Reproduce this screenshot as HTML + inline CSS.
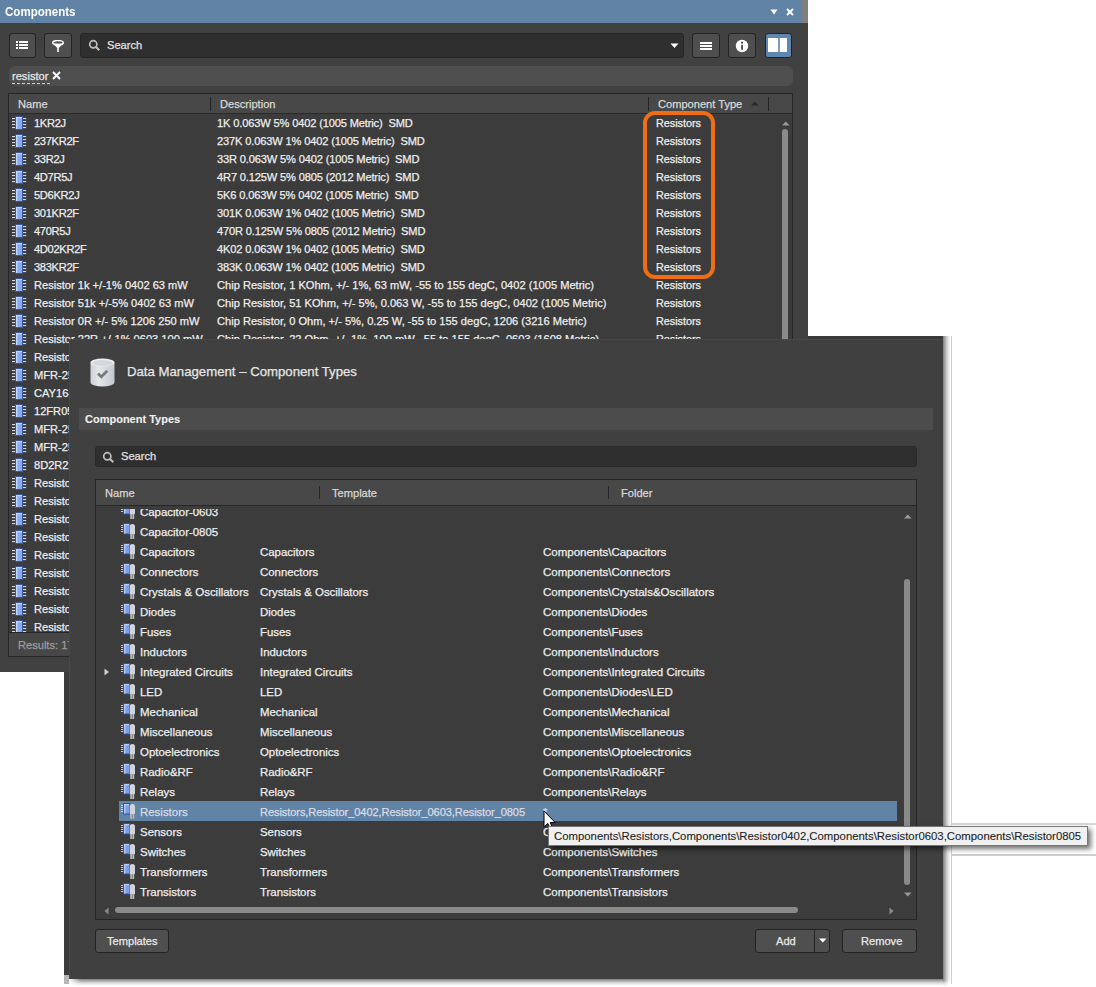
<!DOCTYPE html>
<html><head><meta charset="utf-8">
<style>
*{box-sizing:border-box;margin:0;padding:0}
html,body{width:1096px;height:987px;overflow:hidden;background:#fff}
body{position:relative;font-family:"Liberation Sans",sans-serif;font-size:11.1px;color:#eeeeee;-webkit-text-stroke:0.25px currentColor}
.a{position:absolute}
.t{position:absolute;white-space:pre;line-height:1}
.btn{position:absolute;background:#4f4f4f;border:1px solid #232323;border-radius:3px}
svg{display:block}
/* panel */
#panel{position:absolute;left:0;top:0;width:808px;height:672px;background:#414141;overflow:hidden}
#ptable{position:absolute;left:8px;top:93px;width:785px;height:564px;border:1px solid #262626;background:#3c3c3c;overflow:hidden}
#phead{position:absolute;left:0;top:0;width:783px;height:20px;background:#484848;border-bottom:1px solid #2a2a2a}
#pdata{position:absolute;left:0;top:20px;width:783px;height:518px;overflow:hidden}
#pfoot{position:absolute;left:0;top:538px;width:783px;height:24px;background:#474747;border-top:1px solid #262626}
.prow{position:absolute;left:0;height:18px;width:783px;line-height:18px}
.prow .ic{position:absolute;left:3px;top:2px}
.prow .n{position:absolute;left:25px;top:0;white-space:pre}
.prow .d{position:absolute;left:208px;top:0;white-space:pre}
.prow .ty{position:absolute;left:647px;top:0;white-space:pre;font-size:10.8px}
.sep{position:absolute;width:1px;background:#262626}
/* dialog */
#dlg{position:absolute;left:69px;top:339px;width:874px;height:640px;background:#404040}
#dtable{position:absolute;left:25px;top:140px;width:822px;height:441px;border:1px solid #262626;background:#3c3c3c;overflow:hidden}
#dhead{position:absolute;left:0;top:0;width:820px;height:26px;background:#484848;border-bottom:1px solid #262626}
#ddata{position:absolute;left:0;top:29px;width:820px;height:394px;overflow:hidden}
.drow{position:absolute;left:0;height:20px;width:820px;line-height:20px}
.drow .ic{position:absolute;left:25px;top:2px}
.drow .n{position:absolute;left:44px;top:1px;white-space:pre;font-size:11.45px}
.drow .tp{position:absolute;left:164px;top:1px;white-space:pre;font-size:11.4px}
.drow .f{position:absolute;left:447px;top:1px;white-space:pre;font-size:11.5px}
.drow.sel:before{content:"";position:absolute;left:23px;top:0;width:778px;height:20px;background:#6183a6}
.drow.sel span{color:#d6dde6}
</style></head>
<body>
<div id="panel">
  <div class="a" style="left:0;top:0;width:801px;height:23px;background:#6083a6"></div>
  <div class="a" style="left:801px;top:0;width:7px;height:23px;background:#7f7f7f"></div>
  <div class="t" style="left:5px;top:5px;font-weight:bold;font-size:13.2px;color:#fff;-webkit-text-stroke:0;transform:scaleX(.875);transform-origin:0 0">Components</div>
  <svg class="a" style="left:770px;top:9px" width="8" height="6"><path d="M0.5 0.5H7.5L4 5.5Z" fill="#fff"/></svg>
  <svg class="a" style="left:786px;top:8px" width="8" height="8"><path d="M1 1L7 7M7 1L1 7" stroke="#fff" stroke-width="1.8"/></svg>

  <!-- toolbar -->
  <div class="btn" style="left:9px;top:33px;width:27px;height:25px"></div>
  <svg class="a" style="left:15px;top:40px" width="14" height="10"><g fill="#fff"><rect x="1" y="1" width="2" height="2"/><rect x="4" y="1" width="9" height="2"/><rect x="1" y="4" width="2" height="2"/><rect x="4" y="4" width="9" height="2"/><rect x="1" y="7" width="2" height="2"/><rect x="4" y="7" width="9" height="2"/></g></svg>
  <div class="btn" style="left:44px;top:33px;width:28px;height:25px"></div>
  <svg class="a" style="left:51px;top:40px" width="14" height="13"><ellipse cx="7" cy="2.8" rx="5.3" ry="2.2" fill="none" stroke="#fff" stroke-width="1.5"/><path d="M2 3.5L6.2 8V12H7.8V8L12 3.5" fill="#fff"/></svg>
  <div class="a" style="left:80px;top:33px;width:604px;height:25px;background:#2f2f2f;border:1px solid #262626;border-radius:3px"></div>
  <svg class="a" style="left:88px;top:39px" width="13" height="13"><circle cx="5.3" cy="5.3" r="3.6" fill="none" stroke="#bdbdbd" stroke-width="1.7"/><path d="M7.8 7.8L11.3 11.3" stroke="#bdbdbd" stroke-width="2"/></svg>
  <div class="t" style="left:107px;top:40px;color:#e0e0e0">Search</div>
  <svg class="a" style="left:670px;top:43px" width="9" height="6"><path d="M0.5 0.5H8.5L4.5 5Z" fill="#fff"/></svg>
  <div class="btn" style="left:692px;top:33px;width:28px;height:25px"></div>
  <svg class="a" style="left:699px;top:41px" width="14" height="10"><g fill="#fff"><rect x="1" y="1" width="12" height="2"/><rect x="1" y="4" width="12" height="2"/><rect x="1" y="7" width="12" height="2"/></g></svg>
  <div class="btn" style="left:728px;top:33px;width:28px;height:25px"></div>
  <svg class="a" style="left:735px;top:39px" width="14" height="14"><circle cx="7" cy="7" r="6.2" fill="#fff"/><rect x="6.1" y="5.8" width="1.9" height="5" fill="#4f4f4f"/><circle cx="7.05" cy="3.7" r="1.1" fill="#4f4f4f"/></svg>
  <div class="btn" style="left:765px;top:33px;width:27px;height:25px;background:#5f86ae"></div>
  <div class="a" style="left:768px;top:38px;width:19px;height:14px;background:#fff"></div>
  <div class="a" style="left:778px;top:38px;width:2px;height:14px;background:#7b9cc0"></div>

  <!-- filter chip row -->
  <div class="a" style="left:9px;top:66px;width:784px;height:20px;background:#4e4e4e;border-radius:6px"></div>
  <div class="t" style="left:12px;top:71px;color:#e8e8e8">resistor</div>
  <div class="a" style="left:12px;top:83px;width:38px;height:0;border-top:1px dashed #cfcfcf"></div>
  <svg class="a" style="left:52px;top:71px" width="9" height="9"><path d="M1 1L8 8M8 1L1 8" stroke="#fff" stroke-width="1.9"/></svg>

  <!-- table -->
  <div id="ptable">
    <div id="phead">
      <div class="t" style="left:9px;top:5px;color:#d8d8d8">Name</div>
      <div class="sep" style="left:201px;top:3px;height:14px"></div>
      <div class="t" style="left:211px;top:5px;color:#d8d8d8">Description</div>
      <div class="sep" style="left:639px;top:3px;height:14px"></div>
      <div class="t" style="left:649px;top:5px;color:#d8d8d8">Component Type</div>
      <svg class="a" style="left:742px;top:7px" width="8" height="5"><path d="M0 4.5H7.5L3.75 0.5Z" fill="#2a2a2a"/></svg>
      <div class="sep" style="left:759px;top:3px;height:14px"></div>
    </div>
    <div id="pdata">
<div class="prow" style="top:0px"><svg class="ic" width="15" height="15" viewBox="0 0 15 15"><g fill="#d0d6e2"><rect x="0" y="2" width="3.2" height="1.1"/><rect x="0" y="5" width="3.2" height="1.1"/><rect x="0" y="8" width="3.2" height="1.1"/><rect x="0" y="11" width="3.2" height="1.1"/><rect x="11" y="2" width="3.2" height="1.1"/><rect x="11" y="5" width="3.2" height="1.1"/><rect x="11" y="8" width="3.2" height="1.1"/><rect x="11" y="11" width="3.2" height="1.1"/></g><rect x="3.5" y="0.5" width="7" height="13" fill="#88aaee" stroke="#3a56a0" stroke-width="1"/><rect x="4" y="1" width="1.4" height="12" fill="#c2d8ff"/><rect x="4" y="1" width="6" height="1.3" fill="#c2d8ff"/></svg><span class="n" style="letter-spacing:-0.3px">1KR2J</span><span class="d" style="letter-spacing:-0.15px">1K 0.063W 5% 0402 (1005 Metric)  SMD</span><span class="ty">Resistors</span></div>
<div class="prow" style="top:18px"><svg class="ic" width="15" height="15" viewBox="0 0 15 15"><g fill="#d0d6e2"><rect x="0" y="2" width="3.2" height="1.1"/><rect x="0" y="5" width="3.2" height="1.1"/><rect x="0" y="8" width="3.2" height="1.1"/><rect x="0" y="11" width="3.2" height="1.1"/><rect x="11" y="2" width="3.2" height="1.1"/><rect x="11" y="5" width="3.2" height="1.1"/><rect x="11" y="8" width="3.2" height="1.1"/><rect x="11" y="11" width="3.2" height="1.1"/></g><rect x="3.5" y="0.5" width="7" height="13" fill="#88aaee" stroke="#3a56a0" stroke-width="1"/><rect x="4" y="1" width="1.4" height="12" fill="#c2d8ff"/><rect x="4" y="1" width="6" height="1.3" fill="#c2d8ff"/></svg><span class="n" style="letter-spacing:-0.3px">237KR2F</span><span class="d" style="letter-spacing:-0.15px">237K 0.063W 1% 0402 (1005 Metric)  SMD</span><span class="ty">Resistors</span></div>
<div class="prow" style="top:36px"><svg class="ic" width="15" height="15" viewBox="0 0 15 15"><g fill="#d0d6e2"><rect x="0" y="2" width="3.2" height="1.1"/><rect x="0" y="5" width="3.2" height="1.1"/><rect x="0" y="8" width="3.2" height="1.1"/><rect x="0" y="11" width="3.2" height="1.1"/><rect x="11" y="2" width="3.2" height="1.1"/><rect x="11" y="5" width="3.2" height="1.1"/><rect x="11" y="8" width="3.2" height="1.1"/><rect x="11" y="11" width="3.2" height="1.1"/></g><rect x="3.5" y="0.5" width="7" height="13" fill="#88aaee" stroke="#3a56a0" stroke-width="1"/><rect x="4" y="1" width="1.4" height="12" fill="#c2d8ff"/><rect x="4" y="1" width="6" height="1.3" fill="#c2d8ff"/></svg><span class="n" style="letter-spacing:-0.3px">33R2J</span><span class="d" style="letter-spacing:-0.15px">33R 0.063W 5% 0402 (1005 Metric)  SMD</span><span class="ty">Resistors</span></div>
<div class="prow" style="top:54px"><svg class="ic" width="15" height="15" viewBox="0 0 15 15"><g fill="#d0d6e2"><rect x="0" y="2" width="3.2" height="1.1"/><rect x="0" y="5" width="3.2" height="1.1"/><rect x="0" y="8" width="3.2" height="1.1"/><rect x="0" y="11" width="3.2" height="1.1"/><rect x="11" y="2" width="3.2" height="1.1"/><rect x="11" y="5" width="3.2" height="1.1"/><rect x="11" y="8" width="3.2" height="1.1"/><rect x="11" y="11" width="3.2" height="1.1"/></g><rect x="3.5" y="0.5" width="7" height="13" fill="#88aaee" stroke="#3a56a0" stroke-width="1"/><rect x="4" y="1" width="1.4" height="12" fill="#c2d8ff"/><rect x="4" y="1" width="6" height="1.3" fill="#c2d8ff"/></svg><span class="n" style="letter-spacing:-0.3px">4D7R5J</span><span class="d" style="letter-spacing:-0.15px">4R7 0.125W 5% 0805 (2012 Metric)  SMD</span><span class="ty">Resistors</span></div>
<div class="prow" style="top:72px"><svg class="ic" width="15" height="15" viewBox="0 0 15 15"><g fill="#d0d6e2"><rect x="0" y="2" width="3.2" height="1.1"/><rect x="0" y="5" width="3.2" height="1.1"/><rect x="0" y="8" width="3.2" height="1.1"/><rect x="0" y="11" width="3.2" height="1.1"/><rect x="11" y="2" width="3.2" height="1.1"/><rect x="11" y="5" width="3.2" height="1.1"/><rect x="11" y="8" width="3.2" height="1.1"/><rect x="11" y="11" width="3.2" height="1.1"/></g><rect x="3.5" y="0.5" width="7" height="13" fill="#88aaee" stroke="#3a56a0" stroke-width="1"/><rect x="4" y="1" width="1.4" height="12" fill="#c2d8ff"/><rect x="4" y="1" width="6" height="1.3" fill="#c2d8ff"/></svg><span class="n" style="letter-spacing:-0.3px">5D6KR2J</span><span class="d" style="letter-spacing:-0.15px">5K6 0.063W 5% 0402 (1005 Metric)  SMD</span><span class="ty">Resistors</span></div>
<div class="prow" style="top:90px"><svg class="ic" width="15" height="15" viewBox="0 0 15 15"><g fill="#d0d6e2"><rect x="0" y="2" width="3.2" height="1.1"/><rect x="0" y="5" width="3.2" height="1.1"/><rect x="0" y="8" width="3.2" height="1.1"/><rect x="0" y="11" width="3.2" height="1.1"/><rect x="11" y="2" width="3.2" height="1.1"/><rect x="11" y="5" width="3.2" height="1.1"/><rect x="11" y="8" width="3.2" height="1.1"/><rect x="11" y="11" width="3.2" height="1.1"/></g><rect x="3.5" y="0.5" width="7" height="13" fill="#88aaee" stroke="#3a56a0" stroke-width="1"/><rect x="4" y="1" width="1.4" height="12" fill="#c2d8ff"/><rect x="4" y="1" width="6" height="1.3" fill="#c2d8ff"/></svg><span class="n" style="letter-spacing:-0.3px">301KR2F</span><span class="d" style="letter-spacing:-0.15px">301K 0.063W 1% 0402 (1005 Metric)  SMD</span><span class="ty">Resistors</span></div>
<div class="prow" style="top:108px"><svg class="ic" width="15" height="15" viewBox="0 0 15 15"><g fill="#d0d6e2"><rect x="0" y="2" width="3.2" height="1.1"/><rect x="0" y="5" width="3.2" height="1.1"/><rect x="0" y="8" width="3.2" height="1.1"/><rect x="0" y="11" width="3.2" height="1.1"/><rect x="11" y="2" width="3.2" height="1.1"/><rect x="11" y="5" width="3.2" height="1.1"/><rect x="11" y="8" width="3.2" height="1.1"/><rect x="11" y="11" width="3.2" height="1.1"/></g><rect x="3.5" y="0.5" width="7" height="13" fill="#88aaee" stroke="#3a56a0" stroke-width="1"/><rect x="4" y="1" width="1.4" height="12" fill="#c2d8ff"/><rect x="4" y="1" width="6" height="1.3" fill="#c2d8ff"/></svg><span class="n" style="letter-spacing:-0.3px">470R5J</span><span class="d" style="letter-spacing:-0.15px">470R 0.125W 5% 0805 (2012 Metric)  SMD</span><span class="ty">Resistors</span></div>
<div class="prow" style="top:126px"><svg class="ic" width="15" height="15" viewBox="0 0 15 15"><g fill="#d0d6e2"><rect x="0" y="2" width="3.2" height="1.1"/><rect x="0" y="5" width="3.2" height="1.1"/><rect x="0" y="8" width="3.2" height="1.1"/><rect x="0" y="11" width="3.2" height="1.1"/><rect x="11" y="2" width="3.2" height="1.1"/><rect x="11" y="5" width="3.2" height="1.1"/><rect x="11" y="8" width="3.2" height="1.1"/><rect x="11" y="11" width="3.2" height="1.1"/></g><rect x="3.5" y="0.5" width="7" height="13" fill="#88aaee" stroke="#3a56a0" stroke-width="1"/><rect x="4" y="1" width="1.4" height="12" fill="#c2d8ff"/><rect x="4" y="1" width="6" height="1.3" fill="#c2d8ff"/></svg><span class="n" style="letter-spacing:-0.3px">4D02KR2F</span><span class="d" style="letter-spacing:-0.15px">4K02 0.063W 1% 0402 (1005 Metric)  SMD</span><span class="ty">Resistors</span></div>
<div class="prow" style="top:144px"><svg class="ic" width="15" height="15" viewBox="0 0 15 15"><g fill="#d0d6e2"><rect x="0" y="2" width="3.2" height="1.1"/><rect x="0" y="5" width="3.2" height="1.1"/><rect x="0" y="8" width="3.2" height="1.1"/><rect x="0" y="11" width="3.2" height="1.1"/><rect x="11" y="2" width="3.2" height="1.1"/><rect x="11" y="5" width="3.2" height="1.1"/><rect x="11" y="8" width="3.2" height="1.1"/><rect x="11" y="11" width="3.2" height="1.1"/></g><rect x="3.5" y="0.5" width="7" height="13" fill="#88aaee" stroke="#3a56a0" stroke-width="1"/><rect x="4" y="1" width="1.4" height="12" fill="#c2d8ff"/><rect x="4" y="1" width="6" height="1.3" fill="#c2d8ff"/></svg><span class="n" style="letter-spacing:-0.3px">383KR2F</span><span class="d" style="letter-spacing:-0.15px">383K 0.063W 1% 0402 (1005 Metric)  SMD</span><span class="ty">Resistors</span></div>
<div class="prow" style="top:162px"><svg class="ic" width="15" height="15" viewBox="0 0 15 15"><g fill="#d0d6e2"><rect x="0" y="2" width="3.2" height="1.1"/><rect x="0" y="5" width="3.2" height="1.1"/><rect x="0" y="8" width="3.2" height="1.1"/><rect x="0" y="11" width="3.2" height="1.1"/><rect x="11" y="2" width="3.2" height="1.1"/><rect x="11" y="5" width="3.2" height="1.1"/><rect x="11" y="8" width="3.2" height="1.1"/><rect x="11" y="11" width="3.2" height="1.1"/></g><rect x="3.5" y="0.5" width="7" height="13" fill="#88aaee" stroke="#3a56a0" stroke-width="1"/><rect x="4" y="1" width="1.4" height="12" fill="#c2d8ff"/><rect x="4" y="1" width="6" height="1.3" fill="#c2d8ff"/></svg><span class="n">Resistor 1k +/-1% 0402 63 mW</span><span class="d">Chip Resistor, 1 KOhm, +/- 1%, 63 mW, -55 to 155 degC, 0402 (1005 Metric)</span><span class="ty">Resistors</span></div>
<div class="prow" style="top:180px"><svg class="ic" width="15" height="15" viewBox="0 0 15 15"><g fill="#d0d6e2"><rect x="0" y="2" width="3.2" height="1.1"/><rect x="0" y="5" width="3.2" height="1.1"/><rect x="0" y="8" width="3.2" height="1.1"/><rect x="0" y="11" width="3.2" height="1.1"/><rect x="11" y="2" width="3.2" height="1.1"/><rect x="11" y="5" width="3.2" height="1.1"/><rect x="11" y="8" width="3.2" height="1.1"/><rect x="11" y="11" width="3.2" height="1.1"/></g><rect x="3.5" y="0.5" width="7" height="13" fill="#88aaee" stroke="#3a56a0" stroke-width="1"/><rect x="4" y="1" width="1.4" height="12" fill="#c2d8ff"/><rect x="4" y="1" width="6" height="1.3" fill="#c2d8ff"/></svg><span class="n">Resistor 51k +/-5% 0402 63 mW</span><span class="d">Chip Resistor, 51 KOhm, +/- 5%, 0.063 W, -55 to 155 degC, 0402 (1005 Metric)</span><span class="ty">Resistors</span></div>
<div class="prow" style="top:198px"><svg class="ic" width="15" height="15" viewBox="0 0 15 15"><g fill="#d0d6e2"><rect x="0" y="2" width="3.2" height="1.1"/><rect x="0" y="5" width="3.2" height="1.1"/><rect x="0" y="8" width="3.2" height="1.1"/><rect x="0" y="11" width="3.2" height="1.1"/><rect x="11" y="2" width="3.2" height="1.1"/><rect x="11" y="5" width="3.2" height="1.1"/><rect x="11" y="8" width="3.2" height="1.1"/><rect x="11" y="11" width="3.2" height="1.1"/></g><rect x="3.5" y="0.5" width="7" height="13" fill="#88aaee" stroke="#3a56a0" stroke-width="1"/><rect x="4" y="1" width="1.4" height="12" fill="#c2d8ff"/><rect x="4" y="1" width="6" height="1.3" fill="#c2d8ff"/></svg><span class="n">Resistor 0R +/- 5% 1206 250 mW</span><span class="d">Chip Resistor, 0 Ohm, +/- 5%, 0.25 W, -55 to 155 degC, 1206 (3216 Metric)</span><span class="ty">Resistors</span></div>
<div class="prow" style="top:216px"><svg class="ic" width="15" height="15" viewBox="0 0 15 15"><g fill="#d0d6e2"><rect x="0" y="2" width="3.2" height="1.1"/><rect x="0" y="5" width="3.2" height="1.1"/><rect x="0" y="8" width="3.2" height="1.1"/><rect x="0" y="11" width="3.2" height="1.1"/><rect x="11" y="2" width="3.2" height="1.1"/><rect x="11" y="5" width="3.2" height="1.1"/><rect x="11" y="8" width="3.2" height="1.1"/><rect x="11" y="11" width="3.2" height="1.1"/></g><rect x="3.5" y="0.5" width="7" height="13" fill="#88aaee" stroke="#3a56a0" stroke-width="1"/><rect x="4" y="1" width="1.4" height="12" fill="#c2d8ff"/><rect x="4" y="1" width="6" height="1.3" fill="#c2d8ff"/></svg><span class="n">Resistor 22R +/-1% 0603 100 mW</span><span class="d">Chip Resistor, 22 Ohm, +/- 1%, 100 mW, -55 to 155 degC, 0603 (1608 Metric)</span><span class="ty">Resistors</span></div>
<div class="prow" style="top:234px"><svg class="ic" width="15" height="15" viewBox="0 0 15 15"><g fill="#d0d6e2"><rect x="0" y="2" width="3.2" height="1.1"/><rect x="0" y="5" width="3.2" height="1.1"/><rect x="0" y="8" width="3.2" height="1.1"/><rect x="0" y="11" width="3.2" height="1.1"/><rect x="11" y="2" width="3.2" height="1.1"/><rect x="11" y="5" width="3.2" height="1.1"/><rect x="11" y="8" width="3.2" height="1.1"/><rect x="11" y="11" width="3.2" height="1.1"/></g><rect x="3.5" y="0.5" width="7" height="13" fill="#88aaee" stroke="#3a56a0" stroke-width="1"/><rect x="4" y="1" width="1.4" height="12" fill="#c2d8ff"/><rect x="4" y="1" width="6" height="1.3" fill="#c2d8ff"/></svg><span class="n">Resistor</span><span class="d"></span><span class="ty">Resistors</span></div>
<div class="prow" style="top:252px"><svg class="ic" width="15" height="15" viewBox="0 0 15 15"><g fill="#d0d6e2"><rect x="0" y="2" width="3.2" height="1.1"/><rect x="0" y="5" width="3.2" height="1.1"/><rect x="0" y="8" width="3.2" height="1.1"/><rect x="0" y="11" width="3.2" height="1.1"/><rect x="11" y="2" width="3.2" height="1.1"/><rect x="11" y="5" width="3.2" height="1.1"/><rect x="11" y="8" width="3.2" height="1.1"/><rect x="11" y="11" width="3.2" height="1.1"/></g><rect x="3.5" y="0.5" width="7" height="13" fill="#88aaee" stroke="#3a56a0" stroke-width="1"/><rect x="4" y="1" width="1.4" height="12" fill="#c2d8ff"/><rect x="4" y="1" width="6" height="1.3" fill="#c2d8ff"/></svg><span class="n">MFR-25</span><span class="d"></span><span class="ty"></span></div>
<div class="prow" style="top:270px"><svg class="ic" width="15" height="15" viewBox="0 0 15 15"><g fill="#d0d6e2"><rect x="0" y="2" width="3.2" height="1.1"/><rect x="0" y="5" width="3.2" height="1.1"/><rect x="0" y="8" width="3.2" height="1.1"/><rect x="0" y="11" width="3.2" height="1.1"/><rect x="11" y="2" width="3.2" height="1.1"/><rect x="11" y="5" width="3.2" height="1.1"/><rect x="11" y="8" width="3.2" height="1.1"/><rect x="11" y="11" width="3.2" height="1.1"/></g><rect x="3.5" y="0.5" width="7" height="13" fill="#88aaee" stroke="#3a56a0" stroke-width="1"/><rect x="4" y="1" width="1.4" height="12" fill="#c2d8ff"/><rect x="4" y="1" width="6" height="1.3" fill="#c2d8ff"/></svg><span class="n">CAY16-</span><span class="d"></span><span class="ty"></span></div>
<div class="prow" style="top:288px"><svg class="ic" width="15" height="15" viewBox="0 0 15 15"><g fill="#d0d6e2"><rect x="0" y="2" width="3.2" height="1.1"/><rect x="0" y="5" width="3.2" height="1.1"/><rect x="0" y="8" width="3.2" height="1.1"/><rect x="0" y="11" width="3.2" height="1.1"/><rect x="11" y="2" width="3.2" height="1.1"/><rect x="11" y="5" width="3.2" height="1.1"/><rect x="11" y="8" width="3.2" height="1.1"/><rect x="11" y="11" width="3.2" height="1.1"/></g><rect x="3.5" y="0.5" width="7" height="13" fill="#88aaee" stroke="#3a56a0" stroke-width="1"/><rect x="4" y="1" width="1.4" height="12" fill="#c2d8ff"/><rect x="4" y="1" width="6" height="1.3" fill="#c2d8ff"/></svg><span class="n">12FR05</span><span class="d"></span><span class="ty"></span></div>
<div class="prow" style="top:306px"><svg class="ic" width="15" height="15" viewBox="0 0 15 15"><g fill="#d0d6e2"><rect x="0" y="2" width="3.2" height="1.1"/><rect x="0" y="5" width="3.2" height="1.1"/><rect x="0" y="8" width="3.2" height="1.1"/><rect x="0" y="11" width="3.2" height="1.1"/><rect x="11" y="2" width="3.2" height="1.1"/><rect x="11" y="5" width="3.2" height="1.1"/><rect x="11" y="8" width="3.2" height="1.1"/><rect x="11" y="11" width="3.2" height="1.1"/></g><rect x="3.5" y="0.5" width="7" height="13" fill="#88aaee" stroke="#3a56a0" stroke-width="1"/><rect x="4" y="1" width="1.4" height="12" fill="#c2d8ff"/><rect x="4" y="1" width="6" height="1.3" fill="#c2d8ff"/></svg><span class="n">MFR-25</span><span class="d"></span><span class="ty"></span></div>
<div class="prow" style="top:324px"><svg class="ic" width="15" height="15" viewBox="0 0 15 15"><g fill="#d0d6e2"><rect x="0" y="2" width="3.2" height="1.1"/><rect x="0" y="5" width="3.2" height="1.1"/><rect x="0" y="8" width="3.2" height="1.1"/><rect x="0" y="11" width="3.2" height="1.1"/><rect x="11" y="2" width="3.2" height="1.1"/><rect x="11" y="5" width="3.2" height="1.1"/><rect x="11" y="8" width="3.2" height="1.1"/><rect x="11" y="11" width="3.2" height="1.1"/></g><rect x="3.5" y="0.5" width="7" height="13" fill="#88aaee" stroke="#3a56a0" stroke-width="1"/><rect x="4" y="1" width="1.4" height="12" fill="#c2d8ff"/><rect x="4" y="1" width="6" height="1.3" fill="#c2d8ff"/></svg><span class="n">MFR-25</span><span class="d"></span><span class="ty"></span></div>
<div class="prow" style="top:342px"><svg class="ic" width="15" height="15" viewBox="0 0 15 15"><g fill="#d0d6e2"><rect x="0" y="2" width="3.2" height="1.1"/><rect x="0" y="5" width="3.2" height="1.1"/><rect x="0" y="8" width="3.2" height="1.1"/><rect x="0" y="11" width="3.2" height="1.1"/><rect x="11" y="2" width="3.2" height="1.1"/><rect x="11" y="5" width="3.2" height="1.1"/><rect x="11" y="8" width="3.2" height="1.1"/><rect x="11" y="11" width="3.2" height="1.1"/></g><rect x="3.5" y="0.5" width="7" height="13" fill="#88aaee" stroke="#3a56a0" stroke-width="1"/><rect x="4" y="1" width="1.4" height="12" fill="#c2d8ff"/><rect x="4" y="1" width="6" height="1.3" fill="#c2d8ff"/></svg><span class="n">8D2R22</span><span class="d"></span><span class="ty"></span></div>
<div class="prow" style="top:360px"><svg class="ic" width="15" height="15" viewBox="0 0 15 15"><g fill="#d0d6e2"><rect x="0" y="2" width="3.2" height="1.1"/><rect x="0" y="5" width="3.2" height="1.1"/><rect x="0" y="8" width="3.2" height="1.1"/><rect x="0" y="11" width="3.2" height="1.1"/><rect x="11" y="2" width="3.2" height="1.1"/><rect x="11" y="5" width="3.2" height="1.1"/><rect x="11" y="8" width="3.2" height="1.1"/><rect x="11" y="11" width="3.2" height="1.1"/></g><rect x="3.5" y="0.5" width="7" height="13" fill="#88aaee" stroke="#3a56a0" stroke-width="1"/><rect x="4" y="1" width="1.4" height="12" fill="#c2d8ff"/><rect x="4" y="1" width="6" height="1.3" fill="#c2d8ff"/></svg><span class="n">Resistor</span><span class="d"></span><span class="ty"></span></div>
<div class="prow" style="top:378px"><svg class="ic" width="15" height="15" viewBox="0 0 15 15"><g fill="#d0d6e2"><rect x="0" y="2" width="3.2" height="1.1"/><rect x="0" y="5" width="3.2" height="1.1"/><rect x="0" y="8" width="3.2" height="1.1"/><rect x="0" y="11" width="3.2" height="1.1"/><rect x="11" y="2" width="3.2" height="1.1"/><rect x="11" y="5" width="3.2" height="1.1"/><rect x="11" y="8" width="3.2" height="1.1"/><rect x="11" y="11" width="3.2" height="1.1"/></g><rect x="3.5" y="0.5" width="7" height="13" fill="#88aaee" stroke="#3a56a0" stroke-width="1"/><rect x="4" y="1" width="1.4" height="12" fill="#c2d8ff"/><rect x="4" y="1" width="6" height="1.3" fill="#c2d8ff"/></svg><span class="n">Resistor</span><span class="d"></span><span class="ty"></span></div>
<div class="prow" style="top:396px"><svg class="ic" width="15" height="15" viewBox="0 0 15 15"><g fill="#d0d6e2"><rect x="0" y="2" width="3.2" height="1.1"/><rect x="0" y="5" width="3.2" height="1.1"/><rect x="0" y="8" width="3.2" height="1.1"/><rect x="0" y="11" width="3.2" height="1.1"/><rect x="11" y="2" width="3.2" height="1.1"/><rect x="11" y="5" width="3.2" height="1.1"/><rect x="11" y="8" width="3.2" height="1.1"/><rect x="11" y="11" width="3.2" height="1.1"/></g><rect x="3.5" y="0.5" width="7" height="13" fill="#88aaee" stroke="#3a56a0" stroke-width="1"/><rect x="4" y="1" width="1.4" height="12" fill="#c2d8ff"/><rect x="4" y="1" width="6" height="1.3" fill="#c2d8ff"/></svg><span class="n">Resistor</span><span class="d"></span><span class="ty"></span></div>
<div class="prow" style="top:414px"><svg class="ic" width="15" height="15" viewBox="0 0 15 15"><g fill="#d0d6e2"><rect x="0" y="2" width="3.2" height="1.1"/><rect x="0" y="5" width="3.2" height="1.1"/><rect x="0" y="8" width="3.2" height="1.1"/><rect x="0" y="11" width="3.2" height="1.1"/><rect x="11" y="2" width="3.2" height="1.1"/><rect x="11" y="5" width="3.2" height="1.1"/><rect x="11" y="8" width="3.2" height="1.1"/><rect x="11" y="11" width="3.2" height="1.1"/></g><rect x="3.5" y="0.5" width="7" height="13" fill="#88aaee" stroke="#3a56a0" stroke-width="1"/><rect x="4" y="1" width="1.4" height="12" fill="#c2d8ff"/><rect x="4" y="1" width="6" height="1.3" fill="#c2d8ff"/></svg><span class="n">Resistor</span><span class="d"></span><span class="ty"></span></div>
<div class="prow" style="top:432px"><svg class="ic" width="15" height="15" viewBox="0 0 15 15"><g fill="#d0d6e2"><rect x="0" y="2" width="3.2" height="1.1"/><rect x="0" y="5" width="3.2" height="1.1"/><rect x="0" y="8" width="3.2" height="1.1"/><rect x="0" y="11" width="3.2" height="1.1"/><rect x="11" y="2" width="3.2" height="1.1"/><rect x="11" y="5" width="3.2" height="1.1"/><rect x="11" y="8" width="3.2" height="1.1"/><rect x="11" y="11" width="3.2" height="1.1"/></g><rect x="3.5" y="0.5" width="7" height="13" fill="#88aaee" stroke="#3a56a0" stroke-width="1"/><rect x="4" y="1" width="1.4" height="12" fill="#c2d8ff"/><rect x="4" y="1" width="6" height="1.3" fill="#c2d8ff"/></svg><span class="n">Resistor</span><span class="d"></span><span class="ty"></span></div>
<div class="prow" style="top:450px"><svg class="ic" width="15" height="15" viewBox="0 0 15 15"><g fill="#d0d6e2"><rect x="0" y="2" width="3.2" height="1.1"/><rect x="0" y="5" width="3.2" height="1.1"/><rect x="0" y="8" width="3.2" height="1.1"/><rect x="0" y="11" width="3.2" height="1.1"/><rect x="11" y="2" width="3.2" height="1.1"/><rect x="11" y="5" width="3.2" height="1.1"/><rect x="11" y="8" width="3.2" height="1.1"/><rect x="11" y="11" width="3.2" height="1.1"/></g><rect x="3.5" y="0.5" width="7" height="13" fill="#88aaee" stroke="#3a56a0" stroke-width="1"/><rect x="4" y="1" width="1.4" height="12" fill="#c2d8ff"/><rect x="4" y="1" width="6" height="1.3" fill="#c2d8ff"/></svg><span class="n">Resistor</span><span class="d"></span><span class="ty"></span></div>
<div class="prow" style="top:468px"><svg class="ic" width="15" height="15" viewBox="0 0 15 15"><g fill="#d0d6e2"><rect x="0" y="2" width="3.2" height="1.1"/><rect x="0" y="5" width="3.2" height="1.1"/><rect x="0" y="8" width="3.2" height="1.1"/><rect x="0" y="11" width="3.2" height="1.1"/><rect x="11" y="2" width="3.2" height="1.1"/><rect x="11" y="5" width="3.2" height="1.1"/><rect x="11" y="8" width="3.2" height="1.1"/><rect x="11" y="11" width="3.2" height="1.1"/></g><rect x="3.5" y="0.5" width="7" height="13" fill="#88aaee" stroke="#3a56a0" stroke-width="1"/><rect x="4" y="1" width="1.4" height="12" fill="#c2d8ff"/><rect x="4" y="1" width="6" height="1.3" fill="#c2d8ff"/></svg><span class="n">Resistor</span><span class="d"></span><span class="ty"></span></div>
<div class="prow" style="top:486px"><svg class="ic" width="15" height="15" viewBox="0 0 15 15"><g fill="#d0d6e2"><rect x="0" y="2" width="3.2" height="1.1"/><rect x="0" y="5" width="3.2" height="1.1"/><rect x="0" y="8" width="3.2" height="1.1"/><rect x="0" y="11" width="3.2" height="1.1"/><rect x="11" y="2" width="3.2" height="1.1"/><rect x="11" y="5" width="3.2" height="1.1"/><rect x="11" y="8" width="3.2" height="1.1"/><rect x="11" y="11" width="3.2" height="1.1"/></g><rect x="3.5" y="0.5" width="7" height="13" fill="#88aaee" stroke="#3a56a0" stroke-width="1"/><rect x="4" y="1" width="1.4" height="12" fill="#c2d8ff"/><rect x="4" y="1" width="6" height="1.3" fill="#c2d8ff"/></svg><span class="n">Resistor</span><span class="d"></span><span class="ty"></span></div>
<div class="prow" style="top:504px"><svg class="ic" width="15" height="15" viewBox="0 0 15 15"><g fill="#d0d6e2"><rect x="0" y="2" width="3.2" height="1.1"/><rect x="0" y="5" width="3.2" height="1.1"/><rect x="0" y="8" width="3.2" height="1.1"/><rect x="0" y="11" width="3.2" height="1.1"/><rect x="11" y="2" width="3.2" height="1.1"/><rect x="11" y="5" width="3.2" height="1.1"/><rect x="11" y="8" width="3.2" height="1.1"/><rect x="11" y="11" width="3.2" height="1.1"/></g><rect x="3.5" y="0.5" width="7" height="13" fill="#88aaee" stroke="#3a56a0" stroke-width="1"/><rect x="4" y="1" width="1.4" height="12" fill="#c2d8ff"/><rect x="4" y="1" width="6" height="1.3" fill="#c2d8ff"/></svg><span class="n">Resistor</span><span class="d"></span><span class="ty"></span></div>
    </div>
    <svg class="a" style="left:773px;top:27px" width="8" height="5"><path d="M0 4.5H7.5L3.75 0.5Z" fill="#9a9a9a"/></svg>
    <div class="a" style="left:773px;top:35px;width:6px;height:300px;background:#8a8a8a;border-radius:3px"></div>
    <div id="pfoot">
      <div class="t" style="left:9px;top:7px;color:#9c9c9c">Results: 17</div>
    </div>
  </div>
  <!-- orange highlight -->
  <div class="a" style="left:643px;top:111px;width:72px;height:168px;border:4px solid #ef6d15;border-radius:12px"></div>
</div>

<!-- dialog frame bits -->
<div class="a" style="left:808px;top:336px;width:135px;height:3px;background:#3a3a3a"></div>
<div class="a" style="left:64px;top:672px;width:6px;height:303px;background:#3b3b3b;border-right:1px solid #4a4a4a"></div>
<div class="a" style="left:64px;top:975px;width:5px;height:9px;background:#b5b5b5"></div>
<div class="a" style="left:951px;top:336px;width:1px;height:648px;background:#cfcfcf"></div>
<div class="a" style="left:943px;top:336px;width:8px;height:643px;background:linear-gradient(to right,rgba(0,0,0,.5),rgba(0,0,0,.3) 30%,rgba(0,0,0,.1) 65%,rgba(0,0,0,0))"></div>
<div class="a" style="left:69px;top:979px;width:874px;height:7px;background:linear-gradient(to bottom,rgba(0,0,0,.5),rgba(0,0,0,.3) 30%,rgba(0,0,0,.1) 65%,rgba(0,0,0,0));-webkit-mask-image:linear-gradient(to right,transparent,#000 12px)"></div>
<div class="a" style="left:943px;top:979px;width:8px;height:7px;background:radial-gradient(circle at 0 0,rgba(0,0,0,.5) 0,rgba(0,0,0,.3) 2.4px,rgba(0,0,0,.1) 5px,rgba(0,0,0,0) 8px)"></div>

<div id="dlg" style="border-left:1px solid #474747">
  <div class="a" style="left:-1px;top:0;width:874px;height:1px;background:#474747"></div>
  <svg class="a" style="left:20px;top:19px" width="25" height="29" viewBox="0 0 25 29">
    <defs><linearGradient id="cg" x1="0" x2="1"><stop offset="0" stop-color="#cdd2d8"/><stop offset=".35" stop-color="#e4e7ea"/><stop offset="1" stop-color="#c3c8cf"/></linearGradient></defs>
    <path d="M0.5 4.5V24.5A12 4 0 0 0 24.5 24.5V4.5Z" fill="url(#cg)"/>
    <ellipse cx="12.5" cy="4.5" rx="12" ry="4" fill="#eceef0"/>
    <ellipse cx="12.5" cy="5" rx="10.3" ry="2.9" fill="#d4d8dd"/>
    <path d="M8 15.5L11.3 18.8L17.3 12.8" fill="none" stroke="#787b7f" stroke-width="2.7"/>
  </svg>
  <div class="t" style="left:57px;top:26px;font-size:13.2px;color:#e6e6e6">Data Management – Component Types</div>

  <div class="a" style="left:9px;top:69px;width:854px;height:22px;background:#4c4c4c"></div>
  <div class="t" style="left:15px;top:75px;font-weight:bold;font-size:11px;color:#f0f0f0;-webkit-text-stroke:0.1px #f0f0f0">Component Types</div>

  <div class="a" style="left:25px;top:107px;width:822px;height:21px;background:#2f2f2f;border:1px solid #292929;border-radius:3px"></div>
  <svg class="a" style="left:32px;top:112px" width="13" height="13"><circle cx="5.3" cy="5.3" r="3.6" fill="none" stroke="#bdbdbd" stroke-width="1.7"/><path d="M7.8 7.8L11.3 11.3" stroke="#bdbdbd" stroke-width="2"/></svg>
  <div class="t" style="left:51px;top:112px;color:#e0e0e0">Search</div>

  <div id="dtable">
    <div id="dhead">
      <div class="t" style="left:9px;top:8px;color:#d8d8d8">Name</div>
      <div class="sep" style="left:223px;top:6px;height:13px"></div>
      <div class="t" style="left:236px;top:8px;color:#d8d8d8">Template</div>
      <div class="sep" style="left:512px;top:6px;height:13px"></div>
      <div class="t" style="left:525px;top:8px;color:#d8d8d8">Folder</div>
    </div>
    <div id="ddata">
<div class="drow" style="top:-8px"><svg class="ic" width="15" height="17" viewBox="0 0 15 17"><g fill="#c8d0e0"><rect x="0" y="2" width="2" height="1"/><rect x="0" y="4" width="2" height="1"/><rect x="0" y="6" width="2" height="1"/><rect x="0" y="8" width="2" height="1"/></g><rect x="2.5" y="0.5" width="6.2" height="10.5" fill="#7c9fea" stroke="#34509a" stroke-width="1"/><rect x="3" y="1" width="1.4" height="9.5" fill="#b3cbff"/><rect x="3" y="1" width="5.2" height="1.3" fill="#b3cbff"/><path d="M8.7 3.6A2.65 2.65 0 0 1 14 3.6V11H8.7Z" fill="#d3d4d9"/><rect x="9.2" y="11" width="4" height="5" fill="#b9bdbd"/><rect x="10.8" y="11" width="1" height="5" fill="#7e8282"/></svg><span class="n">Capacitor-0603</span><span class="tp"></span><span class="f"></span></div>
<div class="drow" style="top:12px"><svg class="ic" width="15" height="17" viewBox="0 0 15 17"><g fill="#c8d0e0"><rect x="0" y="2" width="2" height="1"/><rect x="0" y="4" width="2" height="1"/><rect x="0" y="6" width="2" height="1"/><rect x="0" y="8" width="2" height="1"/></g><rect x="2.5" y="0.5" width="6.2" height="10.5" fill="#7c9fea" stroke="#34509a" stroke-width="1"/><rect x="3" y="1" width="1.4" height="9.5" fill="#b3cbff"/><rect x="3" y="1" width="5.2" height="1.3" fill="#b3cbff"/><path d="M8.7 3.6A2.65 2.65 0 0 1 14 3.6V11H8.7Z" fill="#d3d4d9"/><rect x="9.2" y="11" width="4" height="5" fill="#b9bdbd"/><rect x="10.8" y="11" width="1" height="5" fill="#7e8282"/></svg><span class="n">Capacitor-0805</span><span class="tp"></span><span class="f"></span></div>
<div class="drow" style="top:32px"><svg class="ic" width="15" height="17" viewBox="0 0 15 17"><g fill="#c8d0e0"><rect x="0" y="2" width="2" height="1"/><rect x="0" y="4" width="2" height="1"/><rect x="0" y="6" width="2" height="1"/><rect x="0" y="8" width="2" height="1"/></g><rect x="2.5" y="0.5" width="6.2" height="10.5" fill="#7c9fea" stroke="#34509a" stroke-width="1"/><rect x="3" y="1" width="1.4" height="9.5" fill="#b3cbff"/><rect x="3" y="1" width="5.2" height="1.3" fill="#b3cbff"/><path d="M8.7 3.6A2.65 2.65 0 0 1 14 3.6V11H8.7Z" fill="#d3d4d9"/><rect x="9.2" y="11" width="4" height="5" fill="#b9bdbd"/><rect x="10.8" y="11" width="1" height="5" fill="#7e8282"/></svg><span class="n">Capacitors</span><span class="tp">Capacitors</span><span class="f">Components\Capacitors</span></div>
<div class="drow" style="top:52px"><svg class="ic" width="15" height="17" viewBox="0 0 15 17"><g fill="#c8d0e0"><rect x="0" y="2" width="2" height="1"/><rect x="0" y="4" width="2" height="1"/><rect x="0" y="6" width="2" height="1"/><rect x="0" y="8" width="2" height="1"/></g><rect x="2.5" y="0.5" width="6.2" height="10.5" fill="#7c9fea" stroke="#34509a" stroke-width="1"/><rect x="3" y="1" width="1.4" height="9.5" fill="#b3cbff"/><rect x="3" y="1" width="5.2" height="1.3" fill="#b3cbff"/><path d="M8.7 3.6A2.65 2.65 0 0 1 14 3.6V11H8.7Z" fill="#d3d4d9"/><rect x="9.2" y="11" width="4" height="5" fill="#b9bdbd"/><rect x="10.8" y="11" width="1" height="5" fill="#7e8282"/></svg><span class="n">Connectors</span><span class="tp">Connectors</span><span class="f">Components\Connectors</span></div>
<div class="drow" style="top:72px"><svg class="ic" width="15" height="17" viewBox="0 0 15 17"><g fill="#c8d0e0"><rect x="0" y="2" width="2" height="1"/><rect x="0" y="4" width="2" height="1"/><rect x="0" y="6" width="2" height="1"/><rect x="0" y="8" width="2" height="1"/></g><rect x="2.5" y="0.5" width="6.2" height="10.5" fill="#7c9fea" stroke="#34509a" stroke-width="1"/><rect x="3" y="1" width="1.4" height="9.5" fill="#b3cbff"/><rect x="3" y="1" width="5.2" height="1.3" fill="#b3cbff"/><path d="M8.7 3.6A2.65 2.65 0 0 1 14 3.6V11H8.7Z" fill="#d3d4d9"/><rect x="9.2" y="11" width="4" height="5" fill="#b9bdbd"/><rect x="10.8" y="11" width="1" height="5" fill="#7e8282"/></svg><span class="n">Crystals &amp; Oscillators</span><span class="tp">Crystals &amp; Oscillators</span><span class="f">Components\Crystals&amp;Oscillators</span></div>
<div class="drow" style="top:92px"><svg class="ic" width="15" height="17" viewBox="0 0 15 17"><g fill="#c8d0e0"><rect x="0" y="2" width="2" height="1"/><rect x="0" y="4" width="2" height="1"/><rect x="0" y="6" width="2" height="1"/><rect x="0" y="8" width="2" height="1"/></g><rect x="2.5" y="0.5" width="6.2" height="10.5" fill="#7c9fea" stroke="#34509a" stroke-width="1"/><rect x="3" y="1" width="1.4" height="9.5" fill="#b3cbff"/><rect x="3" y="1" width="5.2" height="1.3" fill="#b3cbff"/><path d="M8.7 3.6A2.65 2.65 0 0 1 14 3.6V11H8.7Z" fill="#d3d4d9"/><rect x="9.2" y="11" width="4" height="5" fill="#b9bdbd"/><rect x="10.8" y="11" width="1" height="5" fill="#7e8282"/></svg><span class="n">Diodes</span><span class="tp">Diodes</span><span class="f">Components\Diodes</span></div>
<div class="drow" style="top:112px"><svg class="ic" width="15" height="17" viewBox="0 0 15 17"><g fill="#c8d0e0"><rect x="0" y="2" width="2" height="1"/><rect x="0" y="4" width="2" height="1"/><rect x="0" y="6" width="2" height="1"/><rect x="0" y="8" width="2" height="1"/></g><rect x="2.5" y="0.5" width="6.2" height="10.5" fill="#7c9fea" stroke="#34509a" stroke-width="1"/><rect x="3" y="1" width="1.4" height="9.5" fill="#b3cbff"/><rect x="3" y="1" width="5.2" height="1.3" fill="#b3cbff"/><path d="M8.7 3.6A2.65 2.65 0 0 1 14 3.6V11H8.7Z" fill="#d3d4d9"/><rect x="9.2" y="11" width="4" height="5" fill="#b9bdbd"/><rect x="10.8" y="11" width="1" height="5" fill="#7e8282"/></svg><span class="n">Fuses</span><span class="tp">Fuses</span><span class="f">Components\Fuses</span></div>
<div class="drow" style="top:132px"><svg class="ic" width="15" height="17" viewBox="0 0 15 17"><g fill="#c8d0e0"><rect x="0" y="2" width="2" height="1"/><rect x="0" y="4" width="2" height="1"/><rect x="0" y="6" width="2" height="1"/><rect x="0" y="8" width="2" height="1"/></g><rect x="2.5" y="0.5" width="6.2" height="10.5" fill="#7c9fea" stroke="#34509a" stroke-width="1"/><rect x="3" y="1" width="1.4" height="9.5" fill="#b3cbff"/><rect x="3" y="1" width="5.2" height="1.3" fill="#b3cbff"/><path d="M8.7 3.6A2.65 2.65 0 0 1 14 3.6V11H8.7Z" fill="#d3d4d9"/><rect x="9.2" y="11" width="4" height="5" fill="#b9bdbd"/><rect x="10.8" y="11" width="1" height="5" fill="#7e8282"/></svg><span class="n">Inductors</span><span class="tp">Inductors</span><span class="f">Components\Inductors</span></div>
<div class="drow" style="top:152px"><svg class="ic" width="15" height="17" viewBox="0 0 15 17"><g fill="#c8d0e0"><rect x="0" y="2" width="2" height="1"/><rect x="0" y="4" width="2" height="1"/><rect x="0" y="6" width="2" height="1"/><rect x="0" y="8" width="2" height="1"/></g><rect x="2.5" y="0.5" width="6.2" height="10.5" fill="#7c9fea" stroke="#34509a" stroke-width="1"/><rect x="3" y="1" width="1.4" height="9.5" fill="#b3cbff"/><rect x="3" y="1" width="5.2" height="1.3" fill="#b3cbff"/><path d="M8.7 3.6A2.65 2.65 0 0 1 14 3.6V11H8.7Z" fill="#d3d4d9"/><rect x="9.2" y="11" width="4" height="5" fill="#b9bdbd"/><rect x="10.8" y="11" width="1" height="5" fill="#7e8282"/></svg><span class="n">Integrated Circuits</span><span class="tp">Integrated Circuits</span><span class="f">Components\Integrated Circuits</span></div>
<div class="drow" style="top:172px"><svg class="ic" width="15" height="17" viewBox="0 0 15 17"><g fill="#c8d0e0"><rect x="0" y="2" width="2" height="1"/><rect x="0" y="4" width="2" height="1"/><rect x="0" y="6" width="2" height="1"/><rect x="0" y="8" width="2" height="1"/></g><rect x="2.5" y="0.5" width="6.2" height="10.5" fill="#7c9fea" stroke="#34509a" stroke-width="1"/><rect x="3" y="1" width="1.4" height="9.5" fill="#b3cbff"/><rect x="3" y="1" width="5.2" height="1.3" fill="#b3cbff"/><path d="M8.7 3.6A2.65 2.65 0 0 1 14 3.6V11H8.7Z" fill="#d3d4d9"/><rect x="9.2" y="11" width="4" height="5" fill="#b9bdbd"/><rect x="10.8" y="11" width="1" height="5" fill="#7e8282"/></svg><span class="n">LED</span><span class="tp">LED</span><span class="f">Components\Diodes\LED</span></div>
<div class="drow" style="top:192px"><svg class="ic" width="15" height="17" viewBox="0 0 15 17"><g fill="#c8d0e0"><rect x="0" y="2" width="2" height="1"/><rect x="0" y="4" width="2" height="1"/><rect x="0" y="6" width="2" height="1"/><rect x="0" y="8" width="2" height="1"/></g><rect x="2.5" y="0.5" width="6.2" height="10.5" fill="#7c9fea" stroke="#34509a" stroke-width="1"/><rect x="3" y="1" width="1.4" height="9.5" fill="#b3cbff"/><rect x="3" y="1" width="5.2" height="1.3" fill="#b3cbff"/><path d="M8.7 3.6A2.65 2.65 0 0 1 14 3.6V11H8.7Z" fill="#d3d4d9"/><rect x="9.2" y="11" width="4" height="5" fill="#b9bdbd"/><rect x="10.8" y="11" width="1" height="5" fill="#7e8282"/></svg><span class="n">Mechanical</span><span class="tp">Mechanical</span><span class="f">Components\Mechanical</span></div>
<div class="drow" style="top:212px"><svg class="ic" width="15" height="17" viewBox="0 0 15 17"><g fill="#c8d0e0"><rect x="0" y="2" width="2" height="1"/><rect x="0" y="4" width="2" height="1"/><rect x="0" y="6" width="2" height="1"/><rect x="0" y="8" width="2" height="1"/></g><rect x="2.5" y="0.5" width="6.2" height="10.5" fill="#7c9fea" stroke="#34509a" stroke-width="1"/><rect x="3" y="1" width="1.4" height="9.5" fill="#b3cbff"/><rect x="3" y="1" width="5.2" height="1.3" fill="#b3cbff"/><path d="M8.7 3.6A2.65 2.65 0 0 1 14 3.6V11H8.7Z" fill="#d3d4d9"/><rect x="9.2" y="11" width="4" height="5" fill="#b9bdbd"/><rect x="10.8" y="11" width="1" height="5" fill="#7e8282"/></svg><span class="n">Miscellaneous</span><span class="tp">Miscellaneous</span><span class="f">Components\Miscellaneous</span></div>
<div class="drow" style="top:232px"><svg class="ic" width="15" height="17" viewBox="0 0 15 17"><g fill="#c8d0e0"><rect x="0" y="2" width="2" height="1"/><rect x="0" y="4" width="2" height="1"/><rect x="0" y="6" width="2" height="1"/><rect x="0" y="8" width="2" height="1"/></g><rect x="2.5" y="0.5" width="6.2" height="10.5" fill="#7c9fea" stroke="#34509a" stroke-width="1"/><rect x="3" y="1" width="1.4" height="9.5" fill="#b3cbff"/><rect x="3" y="1" width="5.2" height="1.3" fill="#b3cbff"/><path d="M8.7 3.6A2.65 2.65 0 0 1 14 3.6V11H8.7Z" fill="#d3d4d9"/><rect x="9.2" y="11" width="4" height="5" fill="#b9bdbd"/><rect x="10.8" y="11" width="1" height="5" fill="#7e8282"/></svg><span class="n">Optoelectronics</span><span class="tp">Optoelectronics</span><span class="f">Components\Optoelectronics</span></div>
<div class="drow" style="top:252px"><svg class="ic" width="15" height="17" viewBox="0 0 15 17"><g fill="#c8d0e0"><rect x="0" y="2" width="2" height="1"/><rect x="0" y="4" width="2" height="1"/><rect x="0" y="6" width="2" height="1"/><rect x="0" y="8" width="2" height="1"/></g><rect x="2.5" y="0.5" width="6.2" height="10.5" fill="#7c9fea" stroke="#34509a" stroke-width="1"/><rect x="3" y="1" width="1.4" height="9.5" fill="#b3cbff"/><rect x="3" y="1" width="5.2" height="1.3" fill="#b3cbff"/><path d="M8.7 3.6A2.65 2.65 0 0 1 14 3.6V11H8.7Z" fill="#d3d4d9"/><rect x="9.2" y="11" width="4" height="5" fill="#b9bdbd"/><rect x="10.8" y="11" width="1" height="5" fill="#7e8282"/></svg><span class="n">Radio&amp;RF</span><span class="tp">Radio&amp;RF</span><span class="f">Components\Radio&amp;RF</span></div>
<div class="drow" style="top:272px"><svg class="ic" width="15" height="17" viewBox="0 0 15 17"><g fill="#c8d0e0"><rect x="0" y="2" width="2" height="1"/><rect x="0" y="4" width="2" height="1"/><rect x="0" y="6" width="2" height="1"/><rect x="0" y="8" width="2" height="1"/></g><rect x="2.5" y="0.5" width="6.2" height="10.5" fill="#7c9fea" stroke="#34509a" stroke-width="1"/><rect x="3" y="1" width="1.4" height="9.5" fill="#b3cbff"/><rect x="3" y="1" width="5.2" height="1.3" fill="#b3cbff"/><path d="M8.7 3.6A2.65 2.65 0 0 1 14 3.6V11H8.7Z" fill="#d3d4d9"/><rect x="9.2" y="11" width="4" height="5" fill="#b9bdbd"/><rect x="10.8" y="11" width="1" height="5" fill="#7e8282"/></svg><span class="n">Relays</span><span class="tp">Relays</span><span class="f">Components\Relays</span></div>
<div class="drow sel" style="top:292px"><svg class="ic" width="15" height="17" viewBox="0 0 15 17"><g fill="#c8d0e0"><rect x="0" y="2" width="2" height="1"/><rect x="0" y="4" width="2" height="1"/><rect x="0" y="6" width="2" height="1"/><rect x="0" y="8" width="2" height="1"/></g><rect x="2.5" y="0.5" width="6.2" height="10.5" fill="#7c9fea" stroke="#34509a" stroke-width="1"/><rect x="3" y="1" width="1.4" height="9.5" fill="#b3cbff"/><rect x="3" y="1" width="5.2" height="1.3" fill="#b3cbff"/><path d="M8.7 3.6A2.65 2.65 0 0 1 14 3.6V11H8.7Z" fill="#d3d4d9"/><rect x="9.2" y="11" width="4" height="5" fill="#b9bdbd"/><rect x="10.8" y="11" width="1" height="5" fill="#7e8282"/></svg><span class="n">Resistors</span><span class="tp" style="letter-spacing:-0.1px;font-size:11.1px">Resistors,Resistor_0402,Resistor_0603,Resistor_0805</span><span class="f">*</span></div>
<div class="drow" style="top:312px"><svg class="ic" width="15" height="17" viewBox="0 0 15 17"><g fill="#c8d0e0"><rect x="0" y="2" width="2" height="1"/><rect x="0" y="4" width="2" height="1"/><rect x="0" y="6" width="2" height="1"/><rect x="0" y="8" width="2" height="1"/></g><rect x="2.5" y="0.5" width="6.2" height="10.5" fill="#7c9fea" stroke="#34509a" stroke-width="1"/><rect x="3" y="1" width="1.4" height="9.5" fill="#b3cbff"/><rect x="3" y="1" width="5.2" height="1.3" fill="#b3cbff"/><path d="M8.7 3.6A2.65 2.65 0 0 1 14 3.6V11H8.7Z" fill="#d3d4d9"/><rect x="9.2" y="11" width="4" height="5" fill="#b9bdbd"/><rect x="10.8" y="11" width="1" height="5" fill="#7e8282"/></svg><span class="n">Sensors</span><span class="tp">Sensors</span><span class="f">Components\Sensors</span></div>
<div class="drow" style="top:332px"><svg class="ic" width="15" height="17" viewBox="0 0 15 17"><g fill="#c8d0e0"><rect x="0" y="2" width="2" height="1"/><rect x="0" y="4" width="2" height="1"/><rect x="0" y="6" width="2" height="1"/><rect x="0" y="8" width="2" height="1"/></g><rect x="2.5" y="0.5" width="6.2" height="10.5" fill="#7c9fea" stroke="#34509a" stroke-width="1"/><rect x="3" y="1" width="1.4" height="9.5" fill="#b3cbff"/><rect x="3" y="1" width="5.2" height="1.3" fill="#b3cbff"/><path d="M8.7 3.6A2.65 2.65 0 0 1 14 3.6V11H8.7Z" fill="#d3d4d9"/><rect x="9.2" y="11" width="4" height="5" fill="#b9bdbd"/><rect x="10.8" y="11" width="1" height="5" fill="#7e8282"/></svg><span class="n">Switches</span><span class="tp">Switches</span><span class="f">Components\Switches</span></div>
<div class="drow" style="top:352px"><svg class="ic" width="15" height="17" viewBox="0 0 15 17"><g fill="#c8d0e0"><rect x="0" y="2" width="2" height="1"/><rect x="0" y="4" width="2" height="1"/><rect x="0" y="6" width="2" height="1"/><rect x="0" y="8" width="2" height="1"/></g><rect x="2.5" y="0.5" width="6.2" height="10.5" fill="#7c9fea" stroke="#34509a" stroke-width="1"/><rect x="3" y="1" width="1.4" height="9.5" fill="#b3cbff"/><rect x="3" y="1" width="5.2" height="1.3" fill="#b3cbff"/><path d="M8.7 3.6A2.65 2.65 0 0 1 14 3.6V11H8.7Z" fill="#d3d4d9"/><rect x="9.2" y="11" width="4" height="5" fill="#b9bdbd"/><rect x="10.8" y="11" width="1" height="5" fill="#7e8282"/></svg><span class="n">Transformers</span><span class="tp">Transformers</span><span class="f">Components\Transformers</span></div>
<div class="drow" style="top:372px"><svg class="ic" width="15" height="17" viewBox="0 0 15 17"><g fill="#c8d0e0"><rect x="0" y="2" width="2" height="1"/><rect x="0" y="4" width="2" height="1"/><rect x="0" y="6" width="2" height="1"/><rect x="0" y="8" width="2" height="1"/></g><rect x="2.5" y="0.5" width="6.2" height="10.5" fill="#7c9fea" stroke="#34509a" stroke-width="1"/><rect x="3" y="1" width="1.4" height="9.5" fill="#b3cbff"/><rect x="3" y="1" width="5.2" height="1.3" fill="#b3cbff"/><path d="M8.7 3.6A2.65 2.65 0 0 1 14 3.6V11H8.7Z" fill="#d3d4d9"/><rect x="9.2" y="11" width="4" height="5" fill="#b9bdbd"/><rect x="10.8" y="11" width="1" height="5" fill="#7e8282"/></svg><span class="n">Transistors</span><span class="tp">Transistors</span><span class="f">Components\Transistors</span></div>
    </div>
    <svg class="a" style="left:8px;top:188px" width="6" height="8"><path d="M0.5 0.5V7.5L5 4Z" fill="#cfcfcf"/></svg>
    <svg class="a" style="left:808px;top:34px" width="8" height="5"><path d="M0 4.5H7.5L3.75 0.5Z" fill="#9a9a9a"/></svg>
    <div class="a" style="left:808px;top:99px;width:6px;height:306px;background:#8a8a8a;border-radius:3px"></div>
    <svg class="a" style="left:808px;top:412px" width="8" height="5"><path d="M0 0.5H7.5L3.75 4.5Z" fill="#9a9a9a"/></svg>
    <svg class="a" style="left:8px;top:427px" width="5" height="8"><path d="M4.5 0.5V7.5L0.5 4Z" fill="#8a8a8a"/></svg>
    <div class="a" style="left:19px;top:427px;width:683px;height:6px;background:#8a8a8a;border-radius:3px"></div>
    <svg class="a" style="left:793px;top:427px" width="5" height="8"><path d="M0.5 0.5V7.5L4.5 4Z" fill="#8a8a8a"/></svg>
  </div>

  <div class="btn" style="left:25px;top:590px;width:74px;height:24px;background:#4f4f4f"></div>
  <div class="t" style="left:37px;top:597px;color:#eaeaea">Templates</div>
  <div class="btn" style="left:685px;top:590px;width:75px;height:24px;background:#4f4f4f"></div>
  <div class="a" style="left:744px;top:591px;width:1px;height:22px;background:#262626"></div>
  <div class="t" style="left:706px;top:597px;color:#eaeaea">Add</div>
  <svg class="a" style="left:749px;top:599px" width="8" height="5"><path d="M0 0.5H7.5L3.75 4.5Z" fill="#fff"/></svg>
  <div class="btn" style="left:772px;top:590px;width:75px;height:24px;background:#4f4f4f"></div>
  <div class="t" style="left:791px;top:597px;color:#eaeaea">Remove</div>
</div>

<!-- tooltip frame lines -->
<div class="a" style="left:951px;top:823px;width:145px;height:2px;background:#d8d8d8"></div>
<div class="a" style="left:951px;top:854px;width:145px;height:2px;background:#d0d0d0"></div>
<div class="a" style="left:952px;top:825px;width:144px;height:29px;background:#fff"></div>

<!-- cursor -->
<svg class="a" style="left:543px;top:810px" width="13" height="20" viewBox="0 0 13 20"><path d="M1 1V17L4.8 13.4L7.3 19L9.6 18L7.2 12.5H12.2Z" fill="#fff" stroke="#000" stroke-width="1"/></svg>

<!-- tooltip -->
<div class="a" style="left:548px;top:826px;width:540px;height:20px;background:#f0f0f0;border:1px solid #777;box-shadow:3px 3px 5px rgba(0,0,0,.55)"></div>
<div class="t" style="left:554px;top:831px;font-size:11.35px;color:#222;-webkit-text-stroke:0.1px #222">Components\Resistors,Components\Resistor0402,Components\Resistor0603,Components\Resistor0805</div>

</body></html>
